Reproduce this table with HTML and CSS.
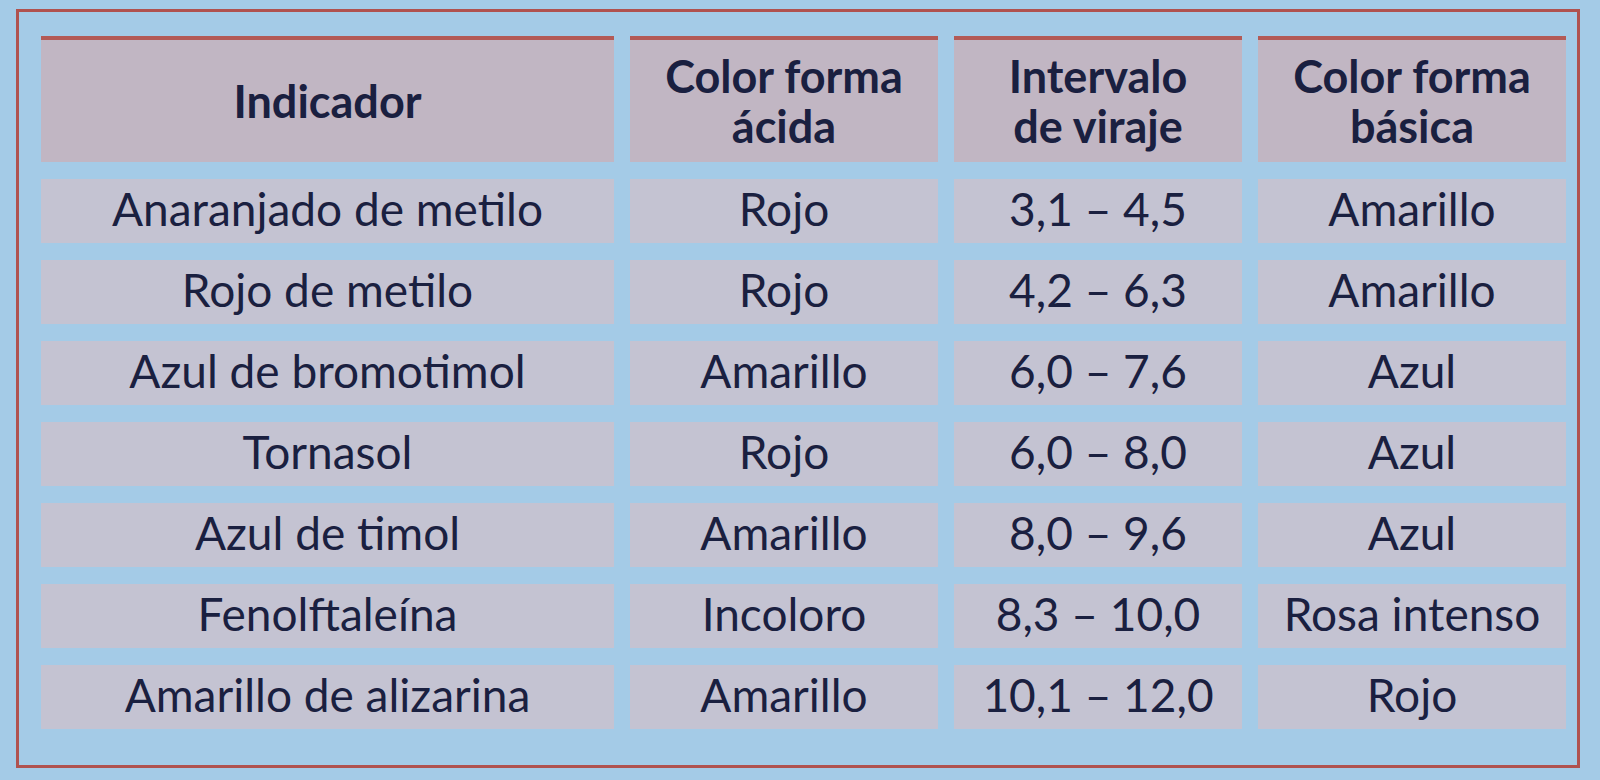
FILE: index.html
```html
<!DOCTYPE html>
<html lang="es">
<head>
<meta charset="utf-8">
<title>Indicadores ácido-base</title>
<link rel="stylesheet" href="styles.css">
</head>
<body>
<div class="frame">
  <div class="grid">
    <div class="cell head">Indicador</div>
    <div class="cell head">Color forma<br>ácida</div>
    <div class="cell head">Intervalo<br>de viraje</div>
    <div class="cell head">Color forma<br>básica</div>

    <div class="cell">Anaranjado de metilo</div>
    <div class="cell">Rojo</div>
    <div class="cell">3,1 – 4,5</div>
    <div class="cell">Amarillo</div>

    <div class="cell">Rojo de metilo</div>
    <div class="cell">Rojo</div>
    <div class="cell">4,2 – 6,3</div>
    <div class="cell">Amarillo</div>

    <div class="cell">Azul de bromotimol</div>
    <div class="cell">Amarillo</div>
    <div class="cell">6,0 – 7,6</div>
    <div class="cell">Azul</div>

    <div class="cell">Tornasol</div>
    <div class="cell">Rojo</div>
    <div class="cell">6,0 – 8,0</div>
    <div class="cell">Azul</div>

    <div class="cell">Azul de timol</div>
    <div class="cell">Amarillo</div>
    <div class="cell">8,0 – 9,6</div>
    <div class="cell">Azul</div>

    <div class="cell">Fenolftaleína</div>
    <div class="cell">Incoloro</div>
    <div class="cell">8,3 – 10,0</div>
    <div class="cell">Rosa intenso</div>

    <div class="cell">Amarillo de alizarina</div>
    <div class="cell">Amarillo</div>
    <div class="cell">10,1 – 12,0</div>
    <div class="cell">Rojo</div>
  </div>
</div>
</body>
</html>
```

FILE: styles.css
```css
html, body {
  margin: 0;
  padding: 0;
  background: #a4cbe7;
}

body {
  font-family: Lato, "Liberation Sans", sans-serif;
  color: #1a2040;
}

.frame {
  box-sizing: border-box;
  width: 1564px;
  margin: 9px 0 0 16px;
  border: 3px solid #b0524f;
  padding: 24px 9px 36px 22px;
}

.grid {
  display: grid;
  grid-template-columns: 573px 308px 288px 308px;
  grid-template-rows: 126px repeat(7, 64px);
  column-gap: 16px;
  row-gap: 17px;
}

.cell {
  background: #c4c3d2;
  display: flex;
  align-items: center;
  justify-content: center;
  text-align: center;
  font-size: 46px;
  line-height: 1;
  padding-bottom: 4px;
  box-sizing: border-box;
  white-space: nowrap;
}

.head {
  background: #c1b6c3;
  border-top: 4px solid #b35a56;
  font-weight: 700;
  font-size: 45px;
  line-height: 50px;
  padding-bottom: 0;
}
```
